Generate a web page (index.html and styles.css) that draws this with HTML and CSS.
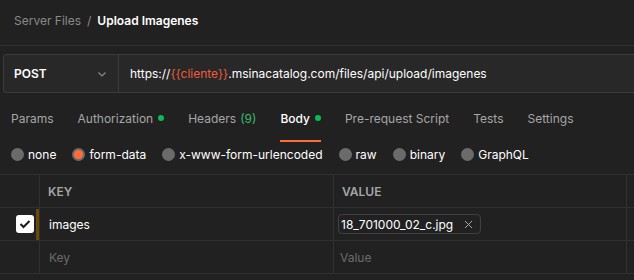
FILE: index.html
```html
<!DOCTYPE html>
<html lang="en">
<head>
    <meta charset="UTF-8">
    <title>Upload Imagenes</title>
    <link rel="stylesheet" href="styles.css">
</head>
<body>
    <div class="breadcrumb">
        <span class="crumb-parent">Server Files</span>
        <span class="crumb-sep">/</span>
        <span class="crumb-current">Upload Imagenes</span>
    </div>

    <div class="url-bar">
        <div class="method">
            <span>POST</span>
            <svg class="chevron" width="10" height="10" viewBox="0 0 10 10">
                <path d="M1.5 3.5 L5 7 L8.5 3.5" fill="none" stroke="#8c8c8c" stroke-width="1.1"/>
            </svg>
        </div>
        <div class="url">https://<span class="var">{{cliente}}</span>.msinacatalog.com/files/api/upload/imagenes</div>
    </div>

    <div class="tabs">
        <div class="tab">Params</div>
        <div class="tab">Authorization<span class="dot"></span></div>
        <div class="tab">Headers <span class="count">(9)</span></div>
        <div class="tab active">Body<span class="dot"></span></div>
        <div class="tab">Pre-request Script</div>
        <div class="tab">Tests</div>
        <div class="tab">Settings</div>
    </div>

    <div class="body-types">
        <label class="radio"><span class="circle"></span>none</label>
        <label class="radio"><span class="circle checked"></span>form-data</label>
        <label class="radio"><span class="circle"></span>x-www-form-urlencoded</label>
        <label class="radio"><span class="circle"></span>raw</label>
        <label class="radio"><span class="circle"></span>binary</label>
        <label class="radio"><span class="circle"></span>GraphQL</label>
    </div>

    <div class="table">
        <div class="row head">
            <div class="cell check"></div>
            <div class="cell key">KEY</div>
            <div class="cell value">VALUE</div>
            <div class="cell extra"></div>
        </div>
        <div class="row">
            <div class="cell check">
                <span class="checkbox">
                    <svg width="12" height="10" viewBox="0 0 12 10">
                        <path d="M1.5 5 L4.5 8 L10.5 2" fill="none" stroke="#1c1c1c" stroke-width="2"/>
                    </svg>
                </span>
                <span class="edit-bar"></span>
            </div>
            <div class="cell key">images</div>
            <div class="cell value">
                <span class="file-chip">18_701000_02_c.jpg
                    <svg width="9" height="9" viewBox="0 0 9 9">
                        <path d="M1 1 L8 8 M8 1 L1 8" stroke="#a6a6a6" stroke-width="1"/>
                    </svg>
                </span>
            </div>
            <div class="cell extra"></div>
        </div>
        <div class="row">
            <div class="cell check"></div>
            <div class="cell key placeholder">Key</div>
            <div class="cell value placeholder">Value</div>
            <div class="cell extra"></div>
        </div>
    </div>
</body>
</html>
```

FILE: styles.css
```css
* {
    margin: 0;
    padding: 0;
    box-sizing: border-box;
}

body {
    background: #212121;
    color: #ffffff;
    font-family: 'Inter', 'Noto Sans', sans-serif;
    font-size: 12px;
    width: 634px;
    height: 280px;
    overflow: hidden;
}

.breadcrumb {
    height: 46px;
    display: flex;
    align-items: center;
    padding: 0 14px 5px;
    border-bottom: 1px solid #303030;
    font-size: 12px;
    gap: 6px;
}

.crumb-parent,
.crumb-sep {
    color: #8a8a8a;
}

.crumb-current {
    font-weight: 600;
}

.url-bar {
    display: flex;
    height: 39px;
    margin: 8px 0 0 3px;
    border: 1px solid #3b3b3b;
    border-right: none;
    border-radius: 4px 0 0 4px;
    background: #282828;
}

.method {
    width: 115px;
    display: flex;
    align-items: center;
    justify-content: space-between;
    padding: 0 11px 0 10px;
    border-right: 1px solid #3b3b3b;
    font-weight: 600;
}

.url {
    display: flex;
    align-items: center;
    padding-left: 11px;
    white-space: nowrap;
}

.var {
    color: #f05b3b;
}

.tabs {
    display: flex;
    gap: 24px;
    padding: 0 11px;
    height: 49px;
    align-items: stretch;
}

.tab {
    display: flex;
    align-items: center;
    color: #a6a6a6;
    border-bottom: 2px solid transparent;
    padding-top: 3px;
}

.tab.active {
    color: #ffffff;
    font-weight: 500;
    border-bottom-color: #ff6c37;
}

.dot {
    width: 6px;
    height: 6px;
    border-radius: 50%;
    background: #0cbb52;
    margin-left: 5px;
}

.count {
    color: #3dba6b;
    margin-left: 4px;
}

.body-types {
    display: flex;
    align-items: center;
    height: 25px;
    padding-left: 11px;
    gap: 16px;
}

.radio {
    display: flex;
    align-items: center;
    gap: 4px;
}

.circle {
    width: 13px;
    height: 13px;
    border-radius: 50%;
    background: #6b6b6b;
}

.circle.checked {
    background: #ff6c37;
    border: 2px solid #6b6b6b;
}

.table {
    margin-top: 7px;
    border-top: 1px solid #303030;
}

.row {
    display: flex;
    height: 33px;
    border-bottom: 1px solid #303030;
}

.cell {
    display: flex;
    align-items: center;
    border-right: 1px solid #303030;
}

.cell.check {
    width: 40px;
    justify-content: flex-end;
    gap: 2px;
}

.cell.key {
    width: 294px;
    padding-left: 9px;
}

.cell.value {
    width: 293px;
    padding-left: 4px;
}

.cell.extra {
    flex: 1;
    border-right: none;
}

.head .cell {
    color: #a6a6a6;
    font-weight: 600;
}

.head .key,
.head .value {
    padding-left: 8px;
}

.value.placeholder {
    padding-left: 6px;
}

.checkbox {
    width: 18px;
    height: 18px;
    background: #ffffff;
    border-radius: 3px;
    display: flex;
    align-items: center;
    justify-content: center;
}

.edit-bar {
    width: 3px;
    height: 31px;
    background: #6b4a08;
}

.file-chip {
    display: inline-flex;
    align-items: center;
    gap: 11px;
    height: 20px;
    padding: 0 7px 0 2px;
    border: 1px solid #404040;
    border-radius: 4px;
}

.placeholder {
    color: #6b6b6b;
}
```
